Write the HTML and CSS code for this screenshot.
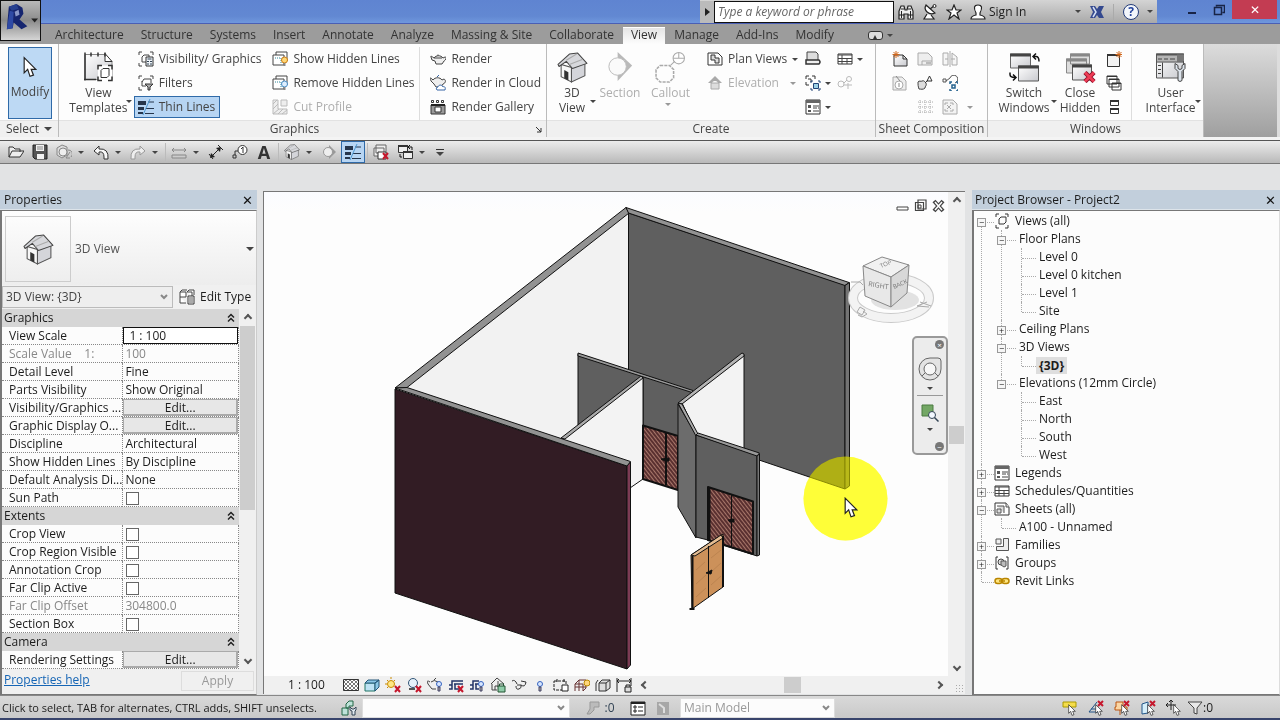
FILE: index.html
```html
<!DOCTYPE html>
<html lang="en">
<head>
<meta charset="utf-8">
<title>Project2 - 3D View: {3D}</title>
<link rel="stylesheet" href="styles.css">
</head>
<body>
<svg class="sprite" aria-hidden="true">
  <defs>
    <linearGradient id="shade" x1="0" y1="0" x2="1" y2="1"><stop offset="0" stop-color="#fff"/><stop offset="1" stop-color="#c9cacf"/></linearGradient>
    <pattern id="hatch" width="3" height="3" patternUnits="userSpaceOnUse" patternTransform="rotate(-38)"><rect width="3" height="3" fill="#5a3030"/><rect width="1" height="3" fill="#a8776a"/></pattern>
    <pattern id="checks" width="4" height="4" patternUnits="userSpaceOnUse"><rect width="4" height="4" fill="#fff"/><path d="M0 0h2v2H0zM2 2h2v2H2z" fill="#777"/></pattern>
  </defs>
  <symbol id="house" viewBox="0 0 30 30"><path d="M4 12v12l10 5V15z" fill="#f7f7f7" stroke="#555"/><path d="M14 15v14l13-6V11z" fill="#d4d5da" stroke="#555"/><path d="M1 12 12 2l8-1 9 10-14 5-6-7-7 5z" fill="#d7d8dc" stroke="#444" stroke-linejoin="round"/><path d="m9 8 10-6M12 12l13-5" stroke="#aaa" fill="none"/><path d="M7 17.500v8l4 2v-8z" fill="#333"/></symbol>
  <symbol id="templates" viewBox="0 0 31 30"><path d="M2 2h20l7 7v18H2z" fill="url(#shade)" stroke="#888"/><path d="M22 1v8h7z" fill="#fff" stroke="#333"/><path d="M2 0v28M8 0v4M15 0v4M22 0v4M1 27h12" fill="none" stroke="#333" stroke-width="1.500"/><path d="M15 13h14v16H15z" fill="#fff"/><path d="M15 17v-4h4M25 13h4v4M29 24v4h-4M19 28h-4v-4" fill="none" stroke="#333" stroke-width="1.500"/><path d="M18 18l2-2h6v7l-2 2h-6z" fill="#fff" stroke="#333"/></symbol>
  <symbol id="vg" viewBox="0 0 16 16"><path d="M1 4V1h3M12 1h3v3M4 15H1v-3M4 6l2-2h5v5l-2 2H4z" fill="none" stroke="#444"/><path d="M8 6h7v9H8z" fill="#eef3f8" stroke="#333"/><path d="M9.500 8h4M9 10.500h2m1 0h2M9 13h2m1 0h2" stroke="#345"/></symbol>
  <symbol id="filters" viewBox="0 0 16 16"><path d="M1 4V1h3M12 1h3v3M4 15H1v-3M4 7l2-3h7v4M4 6v5h4" fill="none" stroke="#444"/><path d="M7 9h8l-3 3v3h-2v-3z" fill="#aaa" stroke="#333"/></symbol>
  <symbol id="thin" viewBox="0 0 16 16"><path d="M0 2h8v4H0zM0 8h6v3H0zM0 13h5v2H0z" fill="#26364c"/><path d="M10 3h6M8 9.500h8M7 14.500h9" stroke="#26364c"/><path d="M12 0 5 16" stroke="#4d98d0"/></symbol>
  <symbol id="hidden-on" viewBox="0 0 16 16"><path d="M1 4v10h11V4zM4 4V1h11v9" fill="#fff" stroke="#444"/><path d="M3 7h6v5" fill="none" stroke="#389" stroke-dasharray="1 1"/><circle cx="12.500" cy="9" r="3" fill="#ffd877" stroke="#c87a13"/><path d="M11.500 12h2v3h-2z" fill="#888"/></symbol>
  <symbol id="hidden-off" viewBox="0 0 16 16"><path d="M1 4v10h11V4zM4 4V1h11v9" fill="#fff" stroke="#444"/><path d="M3 7h6v5" fill="none" stroke="#389" stroke-dasharray="1 1"/><circle cx="12.500" cy="9" r="3" fill="#dfefff" stroke="#478bc4"/><path d="M11.500 12h2v3h-2z" fill="#888"/></symbol>
  <symbol id="cut" viewBox="0 0 16 16"><path d="M1 1h5v9h9v5H1zM9 1h6v6H9z" fill="#eee" stroke="#bbb"/><path d="m1 5 4-4M1 10l5-5M1 15l6-5m-1 5 5-5m-1 5 5-4" stroke="#bbb"/></symbol>
  <symbol id="teapot" viewBox="0 0 16 16"><path d="M4 7Q0 4 1 6l1 3 3 1 1 3h6l2-3c2-1 3-4 1-4l-2 1c-2-3-7-3-9 0z" fill="#eee" stroke="#444"/><path d="M4 7h8M8 5V3.500" stroke="#444"/></symbol>
  <symbol id="teacloud" viewBox="0 0 16 16"><path d="M3 5C0 2 0 2 1 6l3 3 2 3h5l2-3c3-1 3-4 1-5l-2 1c-2-3-7-3-9 0z" fill="#eee" stroke="#444"/><path d="M7 2 9 0M7 15h8c1-3-1-4-2-3-1-3-5-2-5 0-2 0-2 2-1 3z" fill="#fff" stroke="#3665a5"/></symbol>
  <symbol id="gallery" viewBox="0 0 16 16"><path d="M1.500 1.500h2v2h-2zM6.500 1.500h2v2h-2zM11.500 1.500h2v2h-2z" fill="#fff" stroke="#333"/><path d="M1 6h14v9H1z" fill="#999" stroke="#333"/><path d="M5 8h6v5H5z" fill="#fff" stroke="#333"/><path d="M1 6h14" stroke="#222" stroke-width="2"/></symbol>
  <symbol id="section" viewBox="0 0 30 32"><path d="M12 0l15 14-15 16z" fill="#b9b9b9"/><circle cx="12" cy="15" r="9" fill="#fafafa" stroke="#bbb"/></symbol>
  <symbol id="callout" viewBox="0 0 30 30"><path d="M5 13h9l4 4v8l-4 4H5l-4-4v-8z" fill="none" stroke="#aaa" stroke-width="1.500" stroke-dasharray="3 1"/><circle cx="23" cy="6" r="5.500" fill="#fff" stroke="#aaa"/><path d="M17.500 6h11M23 1v5M15 13l4-4" stroke="#aaa"/></symbol>
  <symbol id="plan" viewBox="0 0 16 16"><path d="M1 2h10l4 4v8H1z" fill="#fff" stroke="#333"/><path d="M4 4h4v3h4v5H8v-3H4z" fill="#ddd" stroke="#333"/></symbol>
  <symbol id="elev" viewBox="0 0 16 16"><path d="m1 8 7-7 7 7z" fill="#aaa"/><circle cx="8" cy="9" r="3" fill="#fff"/><path d="M4 8h8v6H4z" fill="#ddd" stroke="#aaa"/></symbol>
  <symbol id="draft" viewBox="0 0 16 16"><path d="M2 1h9l2 2v7H2z" fill="#ddd" stroke="#444"/><path d="M1 9h13q2 2 0 4H1z" fill="#eee" stroke="#333" stroke-width="1.500"/></symbol>
  <symbol id="dup" viewBox="0 0 16 16"><path d="M1 4V1h3M7 1h3v3M1 7v3h3M3 4h3v3" fill="none" stroke="#333"/><path d="M8.500 8.500h5v5h-5z" fill="#9cd0e6" stroke="#247"/><path d="M6 8V6h2m5 0h2v2m0 5v2h-2m-5 0H6v-2" fill="none" stroke="#247"/></symbol>
  <symbol id="legend" viewBox="0 0 16 16"><path d="M1 1h14v14H1z" fill="#fff" stroke="#333"/><path d="M1 2.500h14" stroke="#666" stroke-width="3"/><path d="M3 6h3v3H3zM3 11h3v2H3z" fill="#555"/><path d="M8 7h6M8 9h4m1 0h1M8 12h6" stroke="#444"/></symbol>
  <symbol id="sched" viewBox="0 0 16 16"><path d="M1 3h14v10H1z" fill="#fff" stroke="#333"/><path d="M1 4h14M5 4v9M1 7.500h14M1 10.500h14M10 7v6" stroke="#444"/></symbol>
  <symbol id="scope" viewBox="0 0 16 16"><circle cx="4" cy="9" r="3" fill="none" stroke="#bbb"/><circle cx="12" cy="4" r="2.500" fill="none" stroke="#bbb"/><path d="m7 8 3-3M7 10h8M11 8v6" stroke="#bbb"/></symbol>
  <symbol id="sheet" viewBox="0 0 16 16"><path d="M2 4h9l4 4v7H2z" fill="url(#shade)" stroke="#333"/><path d="M11 4v4h4" fill="none" stroke="#333"/><path d="M4 0v7M.5 3.500h7M1.500 1l5 5m0-5-5 5" stroke="#d0661b"/></symbol>
  <symbol id="titleblk" viewBox="0 0 16 16"><path d="M1 2h10l4 4v8H1z" fill="#eee" stroke="#aaa"/><path d="M5 14v-4h10" fill="none" stroke="#aaa"/><path d="M9 11h5v2H9z" fill="#bbb"/></symbol>
  <symbol id="match" viewBox="0 0 16 16"><path d="M1 2h5v12H1zM10 2l5 4v8h-5zM8 0v16" fill="#f6f6f6" stroke="#aaa"/><path d="M3 8h3m3 0h4" stroke="#aaa"/></symbol>
  <symbol id="rev" viewBox="0 0 16 16"><path d="M1 2h9l4 4v9H1z" fill="#eee" stroke="#aaa"/><circle cx="7" cy="10" r="4" fill="#fff" stroke="#aaa"/><path d="m4 1 4 5M7 8v4" stroke="#888"/></symbol>
  <symbol id="guide" viewBox="0 0 16 16"><path d="M1 7c1-2 3 0 4-1 2-1 3 1 4 2 1 3-1 3-1 5-2 2-4 1-6 1-1-3-1-4-1-7z" fill="#ddd" stroke="#444"/><path d="m8 8 3-3M10 6h5l-2.500-5z" fill="none" stroke="#333"/></symbol>
  <symbol id="activate" viewBox="0 0 16 16"><path d="M1 4h3v3H1zM4 6l4-3a4 4 0 1 1 5 5" fill="none" stroke="#555"/><path d="M8 9V7h2m4 0h2v2m0 5v2h-2m-4 0H8v-2m2-4h3v3h-3z" fill="none" stroke="#26638f" stroke-width="1.500"/></symbol>
  <symbol id="grid" viewBox="0 0 16 16"><path d="M1 3h15M1 8h15M1 13h15M3 1v14M8 1v14M13 1v14" stroke="#aaa" stroke-dasharray="1 1"/></symbol>
  <symbol id="vport" viewBox="0 0 16 16"><path d="M1 1h10l4 4v10H1z" fill="#f3f3f3" stroke="#aaa"/><path d="M3 6V4h3m2 0h3v2m0 4v2H8m-2 0H3v-2m2-4 4 4m0-4-4 4" fill="none" stroke="#aaa"/></symbol>
  <symbol id="switch" viewBox="0 0 31 30"><path d="M1.500 1.500h20v14h-20z" fill="url(#shade)" stroke="#666"/><path d="M1 2.500h21" stroke="#444" stroke-width="3"/><path d="M9.500 13.500h20v15h-20z" fill="url(#shade)" stroke="#555"/><path d="M9 14.500h21" stroke="#444" stroke-width="3"/><path d="m27 1-3 3 3 3M24 4h3q3 0 3 5M1 20v2q0 3 5 3M4 22l3 3-3 3" fill="none" stroke="#111" stroke-width="1.500"/></symbol>
  <symbol id="closehid" viewBox="0 0 31 30"><path d="M5.500 1.500h19v10h-19zM1.500 6.500h20v14h-20z" fill="#ddd" stroke="#888"/><path d="M5 2.500h20M1 7.500h21" stroke="#888" stroke-width="3"/><path d="M7.500 12.500h19v15h-19z" fill="url(#shade)" stroke="#555"/><path d="M7 13.500h20" stroke="#444" stroke-width="3"/><path d="m20 20 9 9m0-9-9 9" stroke="#8f1028" stroke-width="4.500"/><path d="m20 20 9 9m0-9-9 9" stroke="#ef3c56" stroke-width="2.500"/></symbol>
  <symbol id="newwin" viewBox="0 0 16 16"><path d="M1.500 3.500h12v12h-12z" fill="#f2f2f2" stroke="#333"/><path d="M1 4h13" stroke="#333" stroke-width="2"/><path d="M13 0v7M9.500 3.500h7M10.500 1l5 5m0-5-5 5" stroke="#d0661b"/></symbol>
  <symbol id="cascade" viewBox="0 0 16 16"><path d="M1 1h10v8H1zM3 4h10v8H3zM6 8h9v7H6z" fill="#fff" stroke="#333"/><path d="M1 1.500h10M3 4.500h10M6 8.500h9" stroke="#333"/></symbol>
  <symbol id="tile" viewBox="0 0 16 16"><path d="M4.500 1.500h8v5h-8zM4.500 9.500h8v5h-8z" fill="#fff" stroke="#333"/><path d="M4 2h9M4 10h9" stroke="#333" stroke-width="2"/></symbol>
  <symbol id="ui" viewBox="0 0 31 30"><path d="M1.500 1.500h27v24h-27z" fill="url(#shade)" stroke="#555"/><path d="M2 5.500h26" stroke="#b5b5b5" stroke-width="7"/><path d="M1 2h28" stroke="#555" stroke-width="2"/><path d="M22 2h7v7h-7z" fill="#777"/><path d="M3 6.500h4m2 0h4m2 0h5M2 9.500h27M7.500 10v15M3 13h3m-3 4h3m-3 4h3" stroke="#444"/><path d="M20 11v5l3 3v9q2 2 4 0v-9l3-3v-5l-3 2v3l-2 1-2-1v-3z" fill="#dde4ec" stroke="#444"/></symbol>
  <symbol id="open" viewBox="0 0 16 16"><path d="M1 13V3h4l2 2h5v3M1 13l3-6h12l-4 6z" fill="#eee" stroke="#333"/></symbol>
  <symbol id="save" viewBox="0 0 16 16"><path d="M1 1h14v14H3l-2-2z" fill="#555" stroke="#222"/><path d="M4 1h8v6H4zM5 10h7v5H5z" fill="#f2f2f2"/><path d="M5 3h6M5 5h6" stroke="#888"/></symbol>
  <symbol id="sync" viewBox="0 0 16 16"><path d="m1 4 5-3 5 2v8l-5 3-5-3z" fill="#ddd" stroke="#888"/><circle cx="7" cy="8" r="4" fill="#eee" stroke="#888"/><path d="m14 8-4 6h4m-2-8a4 4 0 0 1 3 7" fill="none" stroke="#888"/></symbol>
  <symbol id="undo" viewBox="0 0 16 16"><path d="m6 2-5 5 5 4V8q5-1 5 5v2h4q1-11-9-10z" fill="#f7f7f7" stroke="#333"/></symbol>
  <symbol id="redo" viewBox="0 0 16 16"><path d="m10 2 5 5-5 4V8q-5-1-5 5v2H1Q0 4 10 5z" fill="#eee" stroke="#999"/></symbol>
  <symbol id="measure" viewBox="0 0 16 16"><path d="M1 11h14v3H1z" fill="#ccc" stroke="#888"/><path d="M1 6h14M3 4 1 6l2 2m10-4 2 2-2 2" fill="none" stroke="#888"/></symbol>
  <symbol id="dim" viewBox="0 0 16 16"><path d="m3 13 9-9M1 10l4 5M10 1l5 5" stroke="#222"/><path d="m2 14 1-5 4 4zM13 3 8 4l4 4z" fill="#222"/></symbol>
  <symbol id="tag" viewBox="0 0 16 16"><path d="M1 11h3v3H1zM3 11V7h3" fill="none" stroke="#333"/><circle cx="10.500" cy="6" r="4.500" fill="#fff" stroke="#333"/><path d="m9 5 2-2v6" fill="none" stroke="#333"/></symbol>
  <symbol id="sectsm" viewBox="0 0 16 16"><path d="m8 1 7 7-7 7z" fill="#999"/><circle cx="7" cy="8" r="4.500" fill="#eee" stroke="#999"/></symbol>
  <symbol id="redx" viewBox="0 0 16 16"><path d="m10 9 5 6m0-6-5 6" stroke="#c5182d" stroke-width="2"/></symbol>
  <symbol id="closewin" viewBox="0 0 16 16"><path d="M3 1h10v8H3zM1 4h10v8H1z" fill="#eee" stroke="#666"/><path d="M5 8h8v7H5z" fill="#fff" stroke="#333"/><use href="#redx"/></symbol>
  <symbol id="switchsm" viewBox="0 0 16 16"><path d="M1.500 1.500h9v7h-9zM6.500 7.500h9v7h-9z" fill="#eee" stroke="#333"/><path d="M1 2h10M6 8h10" stroke="#333" stroke-width="2"/><path d="M12 3h3v3m-12 4v3h2m8-12-2 2 2 2" fill="none" stroke="#111"/></symbol>
  <symbol id="binoc" viewBox="0 0 16 16"><path d="M1 15V7l2-5h3l1 4h2l1-4h3l2 5v8h-5v-5H6v5z" fill="#eee" stroke="#222" stroke-width="1.200"/><path d="M3 5h3m4 0h3M1 11h5m4 0h5M3.500 7v7m9-7v7" stroke="#222"/></symbol>
  <symbol id="dish" viewBox="0 0 16 16"><path d="M4 1c-3 5 3 11 9 8zM5 10l-3 5h10l-3-4M8 5l4-3" fill="#fff" stroke="#222" stroke-width="1.200"/><circle cx="12.500" cy="2" r="1.500" fill="#fff" stroke="#222"/></symbol>
  <symbol id="star" viewBox="0 0 16 16"><path d="m8 1 2 5h5l-4 3 2 6-5-4-5 4 2-6-4-3h5z" fill="#fff" stroke="#222" stroke-width="1.200"/></symbol>
  <symbol id="person" viewBox="0 0 16 16"><path d="M1 15q0-3 5-4V9Q2 1 8 1t2 8v2q5 1 5 4z" fill="#fff" stroke="#222" stroke-width="1.200"/></symbol>
  <symbol id="exch" viewBox="0 0 16 16"><path d="M1 2h5l2 3 2-3h5l-3 6 3 6h-5l-2-3-2 3H1l3-6z" fill="#34498f"/><path d="m4 3 3 5-3 5" fill="none" stroke="#d5e0f4" stroke-width="1.500"/></symbol>
  <symbol id="views" viewBox="0 0 16 16"><path d="M2 4V1h3M11 1h3v3M14 12v3h-3M5 15H2v-3M5 6l2-2h5v5l-2 2H5z" fill="none" stroke="#333"/></symbol>
  <symbol id="sheets" viewBox="0 0 16 16"><path d="M1 2h11l3 4v8H1z" fill="#fff" stroke="#333"/><path d="M3 5h7v7M3 8h4v4H3zM12 2v4h3" fill="#ddd" stroke="#555"/></symbol>
  <symbol id="families" viewBox="0 0 16 16"><path d="M2 2h5v5H2zM9.500 1.500h5v12h-12v-4h7z" fill="#eee" stroke="#555"/></symbol>
  <symbol id="groups" viewBox="0 0 16 16"><path d="M4 2H2v12h2m8-12h2v12h-2" fill="none" stroke="#333"/><circle cx="7" cy="7" r="3" fill="#ddd" stroke="#444"/><path d="M7 6h5v5l-2 1-3-2z" fill="#bbb" stroke="#555"/></symbol>
  <symbol id="links" viewBox="0 0 16 16"><rect x="1" y="5.500" width="7" height="5" rx="2.500" fill="#ffe680" stroke="#b98500" stroke-width="1.500"/><rect x="8" y="5.500" width="7" height="5" rx="2.500" fill="#ffe680" stroke="#b98500" stroke-width="1.500"/><path d="M5 8h6" stroke="#b98500" stroke-width="1.500"/></symbol>
  <symbol id="edittype" viewBox="0 0 16 16"><path d="M1 3h6v5H1zM8 3l2-2h5v5M1 3l2-2h5M1 8v6h6M8 3h5v4" fill="#fff" stroke="#444"/><path d="M9 7h6v8H9z" fill="#fff" stroke="#333"/><path d="M10 9h4m-4 2h4m-4 2h4" stroke="#555"/></symbol>
  <symbol id="detail" viewBox="0 0 16 16"><path d="M.5 2.500h15v11H.5z" fill="url(#checks)" stroke="#333"/></symbol>
  <symbol id="cube" viewBox="0 0 16 16"><path d="M1 6h10v8H1z" fill="#bde2f4" stroke="#276"/><path d="m1 6 3-3h11l-4 3zM11 14l4-4V3l-4 3z" fill="#8cc8e6" stroke="#257"/></symbol>
  <symbol id="sun" viewBox="0 0 16 16"><circle cx="6" cy="7" r="3.500" fill="#ffe884" stroke="#c98a00"/><path d="M6 0v2M0 7h2M2 3l1 1M10 3 9 4M2 11l1-1" stroke="#c98a00"/><use href="#redx"/></symbol>
  <symbol id="shadow" viewBox="0 0 16 16"><circle cx="7" cy="6" r="4.500" fill="#e6f2fa" stroke="#357"/><path d="M3 12h6" stroke="#555" stroke-width="2"/><use href="#redx"/></symbol>
  <symbol id="bulb" viewBox="0 0 16 16"><circle cx="8" cy="7" r="2.500" fill="#d7e6ff" stroke="#3563c0"/><path d="M7 10h2v4H7z" fill="#aaa" stroke="#446"/></symbol>
  <symbol id="teabulb" viewBox="0 0 16 16"><path d="M3 5C0 3 0 4 1 7l4 5h4M4 5q3-3 7 0M7 3l2-2" fill="none" stroke="#444"/><use href="#bulb" x="4" width="16" height="16"/></symbol>
  <symbol id="cropx" viewBox="0 0 16 16"><path d="M1 12h3V4h11M1 8h3m2-1h9M7 7v5h4" fill="none" stroke="#236" stroke-width="1.500"/><use href="#redx"/></symbol>
  <symbol id="cropb" viewBox="0 0 16 16"><path d="M1 12h3V4h6M1 8h3m2-1h4M7 7v5h3" fill="none" stroke="#236" stroke-width="1.500"/><use href="#bulb" x="4" width="16" height="16"/></symbol>
  <symbol id="lock3d" viewBox="0 0 16 16"><path d="m1 7 6-6 7 6M2 7v6h5M5 13V9h3M8 4v6" fill="none" stroke="#444"/><path d="M8 9h7v6H8z" fill="#8ecba8" stroke="#253"/><path d="M9.500 9V7h4v2" fill="none" stroke="#253"/></symbol>
  <symbol id="glasses" viewBox="0 0 16 16"><path d="M1 4q3-2 5 3M5 9q0 4 3 3t2-4H6m4 0q4 3 5-3l-5-1" fill="none" stroke="#333"/></symbol>
  <symbol id="constr" viewBox="0 0 16 16"><path d="M1 4h12v9H1z" fill="none" stroke="#222" stroke-dasharray="3 1"/><path d="M9 8h6v6H9zM4 2v3m7-3v3" fill="#fff" stroke="#222"/></symbol>
  <symbol id="analytic" viewBox="0 0 16 16"><path d="M1 7l4-4h7v8l-3 3M1 7h8v7M1 7v7m4-7v7m0-11v4M1 10h11" fill="none" stroke="#633"/><circle cx="13" cy="6" r="3" fill="#ffd77b" stroke="#b80"/></symbol>
  <symbol id="displace" viewBox="0 0 16 16"><path d="M4 6h7v8H4zM4 6l3-3h8v8l-4 3M11 6l4-3M1 6v8m2-11-2 3" fill="#ddd" stroke="#333"/></symbol>
  <symbol id="dimlock" viewBox="0 0 16 16"><path d="M1 1v14M15 1v8M1 4h14M3 2 1 4l2 2m10-4 2 2-2 2" fill="none" stroke="#222"/><path d="M9 10h6v5H9zM10 10V8h4v2" fill="#ddd" stroke="#222"/></symbol>
  <symbol id="workset" viewBox="0 0 16 16"><path d="M1 8h6v7H1zM5 4l3-3h4v5H8v2H5z" fill="#bfe3da" stroke="#264"/><path d="M9 7v3l2 1v4h3v-4l1-1V7l-2 2h-2z" fill="#dfe8ee" stroke="#345"/></symbol>
  <symbol id="brush" viewBox="0 0 16 16"><path d="M5 2h9v5H9v3l-4 4H2l3-5z" fill="#bbb" stroke="#999"/></symbol>
  <symbol id="optlist" viewBox="0 0 16 16"><path d="M1 2h14v13H1z" fill="#fff" stroke="#222"/><path d="M1 3h14" stroke="#222" stroke-width="2"/><path d="M4 6h2v2H4zM4 10h2v2H4zM8 7h5m-5 4h5" stroke="#222" fill="none"/></symbol>
  <symbol id="optdis" viewBox="0 0 16 16"><path d="M2 2h12v13H2z" fill="#a7a7a7"/><path d="m4 4 5 4v5" fill="none" stroke="#ddd" stroke-width="2"/></symbol>
  <symbol id="ptr" viewBox="0 0 12 18"><path d="M1 1v13l3-3 2 6 3-1-2-5h4z" fill="#fff" stroke="#222"/></symbol>
  <symbol id="sellink" viewBox="0 0 16 16"><path d="M1 2h13v5H1z" fill="#f5dd4d" stroke="#a90"/><use href="#ptr" x="6" y="4" width="8" height="12"/></symbol>
  <symbol id="selunder" viewBox="0 0 16 16"><path d="M9 2 1 12h9M3 9h7" fill="none" stroke="#258"/><use href="#ptr" x="7" y="4" width="8" height="12"/><path d="m10 1 5 5m0-5-5 5" stroke="#c5182d" stroke-width="2"/></symbol>
  <symbol id="selpin" viewBox="0 0 16 16"><path d="M2 2h7v5h4v3H1V7h1zM6 10v5" fill="#fbd6a4" stroke="#b51"/><use href="#ptr" x="7" y="4" width="8" height="12"/><path d="m10 1 5 5m0-5-5 5" stroke="#c5182d" stroke-width="2"/></symbol>
  <symbol id="selface" viewBox="0 0 16 16"><path d="m2 4 6-2v11l-6 1z" fill="#d5eefa" stroke="#258"/><use href="#ptr" x="7" y="4" width="8" height="12"/><path d="m10 1 5 5m0-5-5 5" stroke="#c5182d" stroke-width="2"/></symbol>
  <symbol id="drag" viewBox="0 0 16 16"><path d="M5 0v10M0 5h10M3 2l2-2 2 2M2 3 0 5l2 2" fill="none" stroke="#222"/><use href="#ptr" x="7" y="4" width="8" height="12"/></symbol>
  <symbol id="funnel" viewBox="0 0 16 16"><path d="M1 2h14l-5 6v6l-3-1V8z" fill="#e8e8e8" stroke="#444"/></symbol>
  <symbol id="collapse" viewBox="0 0 8 10"><path d="m1 4.500 3-3 3 3m-6 4 3-3 3 3" fill="none" stroke="#222" stroke-width="1.500"/></symbol>
</svg>

<header class="titlebar">
  <div class="infocenter">
    <button class="search-toggle" aria-label="Toggle search"><i class="caret right"></i></button>
    <input class="search" type="text" placeholder="Type a keyword or phrase" aria-label="Search help">
    <button aria-label="Search"><svg class="ic"><use href="#binoc"/></svg></button>
    <button aria-label="Subscription"><svg class="ic"><use href="#dish"/></svg></button>
    <button aria-label="Favorites"><svg class="ic"><use href="#star"/></svg></button>
    <button class="signin"><svg class="ic"><use href="#person"/></svg>Sign In</button>
    <button class="drop" aria-label="Account menu"><i class="caret"></i></button>
    <button aria-label="Exchange apps"><svg class="ic"><use href="#exch"/></svg></button>
    <button class="help" aria-label="Help"><span>?</span></button>
    <button class="drop" aria-label="Help menu"><i class="caret"></i></button>
  </div>
  <div class="winbtns">
    <button aria-label="Minimize"><i class="min"></i></button>
    <button aria-label="Restore"><svg width="12" height="12" viewBox="0 0 12 12"><path d="M3.500 2.500v-1h8v7h-2M1.500 3.500h7v7h-7z" fill="none" stroke="#182446" stroke-width="1.500"/></svg></button>
    <button class="close" aria-label="Close">✕</button>
  </div>
</header>
<button class="app" aria-label="Application menu">
  <svg viewBox="0 0 40 40"><path d="M8 6l8-3 6 4 1 6-4 6 8 7-6 3-8-7-1 6-6 1z" fill="#16256f"/><path d="M8 6l8-3 2 5-7 2z" fill="#27408f"/><path d="m14 11 4-2 1 5-4 2z" fill="#8a97c8"/><path d="m9 10 4 1-1 17-6 1z" fill="#2f4aa5"/><path d="M31 18h7l-3.500 4z" fill="#222"/></svg>
</button>

<nav class="tabs">
  <button>Architecture</button><button>Structure</button><button>Systems</button><button>Insert</button><button>Annotate</button><button>Analyze</button><button>Massing &amp; Site</button><button>Collaborate</button><button class="on">View</button><button>Manage</button><button>Add-Ins</button><button>Modify</button>
  <button class="ribbon-state" aria-label="Minimize ribbon"><span>▴</span><i class="caret"></i></button>
</nav>

<section class="ribbon">
  <div class="panel">
    <div class="tools select"><button class="big modify"><svg class="cursor"><use href="#ptr"/></svg><span>Modify</span></button></div>
    <h2>Select <i class="caret wide"></i></h2>
  </div>
  <div class="panel">
    <div class="tools graphics">
      <button class="big"><svg class="lg"><use href="#templates"/></svg><span>View<br>Templates</span><i class="caret"></i></button>
      <div class="col">
        <button><svg class="ic"><use href="#vg"/></svg>Visibility/ Graphics</button>
        <button><svg class="ic"><use href="#filters"/></svg>Filters</button>
        <button class="active"><svg class="ic"><use href="#thin"/></svg>Thin Lines</button>
      </div>
      <div class="col">
        <button><svg class="ic"><use href="#hidden-on"/></svg>Show Hidden Lines</button>
        <button><svg class="ic"><use href="#hidden-off"/></svg>Remove Hidden Lines</button>
        <button disabled><svg class="ic"><use href="#cut"/></svg>Cut Profile</button>
      </div>
      <div class="col ruled">
        <button><svg class="ic"><use href="#teapot"/></svg>Render</button>
        <button><svg class="ic"><use href="#teacloud"/></svg>Render in Cloud</button>
        <button><svg class="ic"><use href="#gallery"/></svg>Render Gallery</button>
      </div>
    </div>
    <h2 class="launch"><span>Graphics</span><svg width="7" height="7" viewBox="0 0 7 7"><path d="m1 1 5 5M6 2v4H2" fill="none" stroke="#333"/></svg></h2>
  </div>
  <div class="panel">
    <div class="tools create">
      <button class="big"><svg class="lg"><use href="#house"/></svg><span>3D<br>View</span><i class="caret"></i></button>
      <button class="big" disabled><svg class="lg"><use href="#section"/></svg><span>Section</span></button>
      <button class="big under" disabled><svg class="lg"><use href="#callout"/></svg><span>Callout</span><i class="caret"></i></button>
      <div class="col">
        <button><svg class="ic"><use href="#plan"/></svg>Plan Views<i class="caret"></i></button>
        <button disabled><svg class="ic"><use href="#elev"/></svg>Elevation<i class="caret"></i></button>
      </div>
      <div class="col mini">
        <button aria-label="Drafting View"><svg class="ic"><use href="#draft"/></svg></button>
        <button aria-label="Duplicate View"><svg class="ic"><use href="#dup"/></svg><i class="caret"></i></button>
        <button aria-label="Legends"><svg class="ic"><use href="#legend"/></svg><i class="caret"></i></button>
      </div>
      <div class="col mini">
        <button aria-label="Schedules"><svg class="ic"><use href="#sched"/></svg><i class="caret"></i></button>
        <button aria-label="Scope Box" disabled><svg class="ic"><use href="#scope"/></svg></button>
      </div>
    </div>
    <h2>Create</h2>
  </div>
  <div class="panel">
    <div class="tools sheetcomp">
      <button aria-label="Sheet"><svg class="ic"><use href="#sheet"/></svg></button>
      <button aria-label="Title Block" disabled><svg class="ic"><use href="#titleblk"/></svg></button>
      <button aria-label="Matchline" disabled><svg class="ic"><use href="#match"/></svg></button>
      <span></span>
      <button aria-label="Revisions" disabled><svg class="ic"><use href="#rev"/></svg></button>
      <button aria-label="Place View"><svg class="ic"><use href="#guide"/></svg></button>
      <button aria-label="View Reference"><svg class="ic"><use href="#activate"/></svg></button>
      <span></span><span></span>
      <button aria-label="Guide Grid" disabled><svg class="ic"><use href="#grid"/></svg></button>
      <button aria-label="Viewports" disabled><svg class="ic"><use href="#vport"/></svg></button>
      <button aria-label="Viewports menu" disabled><i class="caret"></i></button>
    </div>
    <h2>Sheet Composition</h2>
  </div>
  <div class="panel">
    <div class="tools windows">
      <button class="big"><svg class="lg"><use href="#switch"/></svg><span>Switch<br>Windows</span><i class="caret"></i></button>
      <button class="big"><svg class="lg"><use href="#closehid"/></svg><span>Close<br>Hidden</span></button>
      <div class="col mini">
        <button aria-label="Replicate"><svg class="ic"><use href="#newwin"/></svg></button>
        <button aria-label="Cascade"><svg class="ic"><use href="#cascade"/></svg></button>
        <button aria-label="Tile"><svg class="ic"><use href="#tile"/></svg></button>
      </div>
      <button class="big ruled"><svg class="lg"><use href="#ui"/></svg><span>User<br>Interface</span><i class="caret"></i></button>
    </div>
    <h2>Windows</h2>
  </div>
  <div class="rest"></div>
</section>

<div class="qat">
  <button aria-label="Open"><svg class="ic"><use href="#open"/></svg></button>
  <button aria-label="Save"><svg class="ic"><use href="#save"/></svg></button>
  <button class="dd" aria-label="Synchronize"><svg class="ic"><use href="#sync"/></svg><i class="caret"></i></button>
  <button class="dd" aria-label="Undo"><svg class="ic"><use href="#undo"/></svg><i class="caret"></i></button>
  <button class="dd" aria-label="Redo"><svg class="ic"><use href="#redo"/></svg><i class="caret"></i></button>
  <span class="sep"></span>
  <button class="dd" aria-label="Measure"><svg class="ic"><use href="#measure"/></svg><i class="caret"></i></button>
  <button aria-label="Aligned Dimension"><svg class="ic"><use href="#dim"/></svg></button>
  <button aria-label="Tag by Category"><svg class="ic"><use href="#tag"/></svg></button>
  <button class="text-tool" aria-label="Text">A</button>
  <span class="sep"></span>
  <button class="dd" aria-label="Default 3D View"><svg class="ic"><use href="#house"/></svg><i class="caret"></i></button>
  <button aria-label="Section"><svg class="ic"><use href="#sectsm"/></svg></button>
  <button class="active" aria-label="Thin Lines"><svg class="ic"><use href="#thin"/></svg></button>
  <span class="sep"></span>
  <button aria-label="Close Hidden Windows"><svg class="ic"><use href="#closewin"/></svg></button>
  <button class="dd" aria-label="Switch Windows"><svg class="ic"><use href="#switchsm"/></svg><i class="caret"></i></button>
  <button class="custom" aria-label="Customize toolbar"><i class="caret wide"></i></button>
</div>
<div class="options"></div>

<main>
  <aside class="props">
    <header class="dock"><h2>Properties</h2><button aria-label="Close Properties">✕</button></header>
    <div class="props-body">
      <button class="type"><span class="thumb"><svg><use href="#house"/></svg></span><span>3D View</span><i class="caret wide"></i></button>
      <div class="instance">
        <select aria-label="Instance"><option>3D View: {3D}</option></select>
        <button><svg class="ic"><use href="#edittype"/></svg>Edit Type</button>
      </div>
      <div class="sheet">
        <table>
          <tbody>
          <tr class="group"><th colspan="2"><div>Graphics<svg><use href="#collapse"/></svg></div></th></tr>
          <tr><th><label for="vs">View Scale</label></th><td class="field"><input id="vs" type="text" value="1 : 100"></td></tr>
          <tr class="off"><th>Scale Value &nbsp;&nbsp; 1:</th><td>100</td></tr>
          <tr><th>Detail Level</th><td>Fine</td></tr>
          <tr><th>Parts Visibility</th><td>Show Original</td></tr>
          <tr><th>Visibility/Graphics ...</th><td class="cmd"><button>Edit...</button></td></tr>
          <tr><th>Graphic Display O...</th><td class="cmd"><button>Edit...</button></td></tr>
          <tr><th>Discipline</th><td>Architectural</td></tr>
          <tr><th>Show Hidden Lines</th><td>By Discipline</td></tr>
          <tr><th>Default Analysis Di...</th><td>None</td></tr>
          <tr><th><label for="sp">Sun Path</label></th><td><input id="sp" type="checkbox"></td></tr>
          <tr class="group"><th colspan="2"><div>Extents<svg><use href="#collapse"/></svg></div></th></tr>
          <tr><th><label for="cv">Crop View</label></th><td><input id="cv" type="checkbox"></td></tr>
          <tr><th><label for="cr">Crop Region Visible</label></th><td><input id="cr" type="checkbox"></td></tr>
          <tr><th><label for="ac">Annotation Crop</label></th><td><input id="ac" type="checkbox"></td></tr>
          <tr><th><label for="fc">Far Clip Active</label></th><td><input id="fc" type="checkbox"></td></tr>
          <tr class="off"><th>Far Clip Offset</th><td>304800.0</td></tr>
          <tr><th><label for="sb">Section Box</label></th><td><input id="sb" type="checkbox"></td></tr>
          <tr class="group"><th colspan="2"><div>Camera<svg><use href="#collapse"/></svg></div></th></tr>
          <tr><th>Rendering Settings</th><td class="cmd"><button>Edit...</button></td></tr>
          </tbody>
        </table>
        <div class="vbar"><i class="chev up"></i><span class="thumb-v tall"></span><i class="chev down"></i></div>
      </div>
      <footer><a href="#help">Properties help</a><button disabled>Apply</button></footer>
    </div>
  </aside>

  <section class="view">
    <div class="drawing">
      <svg class="model" viewBox="264 192 684 484" preserveAspectRatio="xMinYMin meet" role="img" aria-label="3D model of walls and doors">
        <g stroke="#111" stroke-width="1" stroke-linejoin="round">
          <path d="M407 388 628 213v248H600z" fill="#f2f2f2" stroke="none"/>
          <path d="M628.500 213 845 285v204L628.500 416z" fill="#5f5f5f"/>
          <path d="m395 388 231-180.500 3 5.500L407 387.500z" fill="#929292"/>
          <path d="m626 207.500 223 75-4 3L628.500 213z" fill="#929292"/>
          <path d="m845 285.500 4.500-3V486l-4.500 3z" fill="#737373"/>
          <path d="m578 354 114 37v102l-49-15V378l-65 49z" fill="#5f5f5f"/>
          <path d="m578 353 115 37.500-1 2L578 356z" fill="#999"/>
          <path d="M643 377v102l-13 9v-26l-67-23z" fill="#f3f3f3" stroke="none"/>
          <path d="M643 377v102l-13 9" fill="none"/>
          <path d="m561 438 80-62 2 2-78 61z" fill="#aaa"/>
          <path d="m643 425.500 35 10.500v54l-35-11z" fill="url(#hatch)" stroke-width="2"/>
          <path d="M666 433v52" stroke-width="2"/><path d="m661 459 8-1v3h-4z" fill="#111"/>
          <path d="M682 403 744 355v96l-47-16z" fill="#f3f3f3"/>
          <path d="m678 403 64-50 2 1v2l-62 48z" fill="#b5b5b5"/>
          <path d="m678 404 18 31v103l-18-31z" fill="#6c6c6c"/>
          <path d="m678 403 4 1 16 30-2 2z" fill="#aaa"/>
          <path d="m696 435 61 20v101l-49-16-12-3z" fill="#5f5f5f"/>
          <path d="m696 435 2-2 61.500 20-2.500 3z" fill="#999"/>
          <path d="m757 456 2.500-2v101l-2.500 1z" fill="#777"/>
          <path d="m708 487 45 14.500V554l-45-14z" fill="url(#hatch)" stroke-width="2"/>
          <path d="M709 487v54" stroke-width="3"/><path d="M731.500 495v52"/><path d="m728 520 6-1v3h-4z" fill="#111"/>
          <path d="m691 555 32-21v53l-31 22z" fill="#cc915a"/>
          <path d="m691 555 30-20 2 3-28 18z" fill="#e4bc91"/>
          <path d="m696 570 9-8m-9 22 10-9m-10 22 10-9m5-30 10-8m-10 22 10-9m-10 22 10-9" stroke="#bc8450"/>
          <path d="M692.500 556v53m-3 0h5M723 536v51" stroke-width="2"/><path d="M708.500 546v52"/><path d="m706 573 6-3-1 4z" fill="#111"/>
          <path d="m395 389 232 77v203l-232-76z" fill="#321c24"/>
          <path d="m627 466 3.500-4v203l-3.500 4z" fill="#7d3c55"/>
          <path d="m395 388 12-.5 223.500 74-3.500 4.500z" fill="#929292"/>
        </g>
        <circle class="glow" cx="845.500" cy="498.500" r="42"/>
        <circle class="halo" cx="845.500" cy="498.500" r="42"/>
        <use href="#ptr" x="844" y="497" width="14" height="21"/>
      </svg>
      <div class="mdi"><button aria-label="Minimize view"><svg viewBox="0 0 14 14"><path d="M1 8h11v3H1z" fill="#fff" stroke="#444"/></svg></button><button aria-label="Restore view"><svg viewBox="0 0 14 14"><path d="M4 1h8v9H4zM1.500 3.500h8v8h-8z" fill="#fff" stroke="#444" stroke-width="1.200"/><path d="M4 6h3v3H4z" fill="none" stroke="#444"/></svg></button><button aria-label="Close view"><svg viewBox="0 0 14 14"><path d="m2 2 9 10m0-10-9 10" stroke="#444" stroke-width="4"/><path d="m3 3 7 8m0-8-7 8" stroke="#fff" stroke-width="1.500"/></svg></button></div>
      <svg class="viewcube" viewBox="0 0 96 76" role="img" aria-label="View cube">
        <ellipse cx="46" cy="50" rx="38" ry="20" fill="none" stroke="#c9c9c9" stroke-width="10"/><ellipse cx="46" cy="50" rx="38" ry="20" fill="none" stroke="#f3f3f3" stroke-width="8"/>
        <ellipse cx="50" cy="52" rx="24" ry="10" fill="#e2e2e2"/>
        <path d="m18 18 19-9 27 8-18 12z" fill="#f1f1f1" stroke="#888"/><path d="m18 18 28 11v30L20 48z" fill="#e8e8e8" stroke="#888"/><path d="m46 29 18-12-2 28-16 14z" fill="#d8d8d8" stroke="#888"/>
        <text x="23" y="38" transform="rotate(10 23 38)">RIGHT</text><text x="49" y="41" transform="rotate(-24 49 41)" class="s">BACK</text><text x="36" y="20" transform="rotate(-20 36 20)" class="s">TOP</text>
        <path d="m12 64 3-5 5 3-3 5zm6-1 4 3-5 3-4-2M72 58l12 1m-9-5 11 4m-14 0 10-4M6 34h9l3 3" stroke="#aaa" fill="none"/>
      </svg>
      <div class="navbar">
        <button class="mini-round" aria-label="Close navigation bar">×</button>
        <button aria-label="Steering wheel"><svg width="24" height="24" viewBox="0 0 24 24"><path d="M12 1h8q3 0 3 3v8a11 11 0 1 1-11-11z" fill="#e3e3e3" stroke="#666"/><circle cx="12" cy="12" r="6" fill="#f7f7f7" stroke="#666"/><path d="m7 16-3 3m13-3 3 3" stroke="#666"/></svg><i class="caret"></i></button>
        <button class="line" aria-label="Zoom region"><svg width="18" height="18" viewBox="0 0 18 18"><path d="M1 1h11v11H1z" fill="#73a765" stroke="#4b7a40"/><circle cx="11" cy="11" r="3.500" fill="#f3f8ff" stroke="#345"/><path d="m13.500 13.500 4 4" stroke="#345" stroke-width="1.500"/></svg><i class="caret"></i></button>
        <button class="mini-round" aria-label="Customize navigation bar">−</button>
      </div>
    </div>
    <div class="vbar"><i class="chev up"></i><span class="thumb-v low"></span><i class="chev down"></i></div>
    <div class="viewbar">
      <button class="scale">1 : 100</button>
      <button aria-label="Detail Level"><svg class="ic"><use href="#detail"/></svg></button>
      <button aria-label="Visual Style"><svg class="ic"><use href="#cube"/></svg></button>
      <button aria-label="Sun Path"><svg class="ic"><use href="#sun"/></svg></button>
      <button aria-label="Shadows"><svg class="ic"><use href="#shadow"/></svg></button>
      <button aria-label="Rendering"><svg class="ic"><use href="#teabulb"/></svg></button>
      <button aria-label="Crop View"><svg class="ic"><use href="#cropx"/></svg></button>
      <button aria-label="Crop Region"><svg class="ic"><use href="#cropb"/></svg></button>
      <button aria-label="Lock 3D View"><svg class="ic"><use href="#lock3d"/></svg></button>
      <button aria-label="Temporary Hide"><svg class="ic"><use href="#glasses"/></svg></button>
      <button aria-label="Reveal Hidden"><svg class="ic"><use href="#bulb"/></svg></button>
      <button aria-label="Temporary View Properties"><svg class="ic"><use href="#constr"/></svg></button>
      <button aria-label="Analytical Model"><svg class="ic"><use href="#analytic"/></svg></button>
      <button aria-label="Displacement"><svg class="ic"><use href="#displace"/></svg></button>
      <button aria-label="Constraints"><svg class="ic"><use href="#dimlock"/></svg></button>
      <div class="hbar"><i class="chev left"></i><span class="thumb-h"></span><i class="chev right"></i></div>
    </div>
    <div class="grip"></div>
  </section>

  <aside class="browser">
    <header class="dock"><h2>Project Browser - Project2</h2><button aria-label="Close Project Browser">✕</button></header>
    <ul class="tree">
      <li><div><button>−</button><svg class="ic"><use href="#views"/></svg>Views (all)</div>
        <ul>
          <li><div><button>−</button>Floor Plans</div>
            <ul><li><div>Level 0</div></li><li><div>Level 0 kitchen</div></li><li><div>Level 1</div></li><li><div>Site</div></li></ul></li>
          <li><div><button>+</button>Ceiling Plans</div></li>
          <li><div><button>−</button>3D Views</div>
            <ul><li><div><strong>{3D}</strong></div></li></ul></li>
          <li><div><button>−</button>Elevations (12mm Circle)</div>
            <ul><li><div>East</div></li><li><div>North</div></li><li><div>South</div></li><li><div>West</div></li></ul></li>
        </ul></li>
      <li><div><button>+</button><svg class="ic"><use href="#legend"/></svg>Legends</div></li>
      <li><div><button>+</button><svg class="ic"><use href="#sched"/></svg>Schedules/Quantities</div></li>
      <li><div><button>−</button><svg class="ic"><use href="#sheets"/></svg>Sheets (all)</div>
        <ul><li><div class="bare">A100 - Unnamed</div></li></ul></li>
      <li><div><button>+</button><svg class="ic"><use href="#families"/></svg>Families</div></li>
      <li><div><button>+</button><svg class="ic"><use href="#groups"/></svg>Groups</div></li>
      <li><div class="link"><svg class="ic"><use href="#links"/></svg>Revit Links</div></li>
    </ul>
  </aside>
</main>

<footer class="status">
  <p>Click to select, TAB for alternates, CTRL adds, SHIFT unselects.</p>
  <button aria-label="Worksets"><svg class="ic"><use href="#workset"/></svg></button>
  <select class="workset" aria-label="Active workset"><option></option></select>
  <button class="count" disabled><svg class="ic"><use href="#brush"/></svg>:0</button>
  <button aria-label="Design options"><svg class="ic"><use href="#optlist"/></svg></button>
  <button class="addset" aria-label="Add to set" disabled><svg class="ic"><use href="#optdis"/></svg></button>
  <select class="option" aria-label="Active design option"><option>Main Model</option></select>
  <div class="selection">
    <button aria-label="Select links"><svg class="ic"><use href="#sellink"/></svg></button>
    <button aria-label="Select underlay"><svg class="ic"><use href="#selunder"/></svg></button>
    <button aria-label="Select pinned"><svg class="ic"><use href="#selpin"/></svg></button>
    <button aria-label="Select by face"><svg class="ic"><use href="#selface"/></svg></button>
    <button aria-label="Drag on selection"><svg class="ic"><use href="#drag"/></svg></button>
    <button class="filter"><svg class="ic"><use href="#funnel"/></svg>:0</button>
  </div>
</footer>
</body>
</html>
```

FILE: styles.css
```css
* { box-sizing: border-box; }
body { margin: 0; min-height: 100vh; display: flex; flex-direction: column; font: 12px/18px "Open Sans", "Noto Sans", sans-serif; color: #1c1c1c; background: #e2e3e4; border-bottom: 2px solid #38446c; }
button, input, select { font: inherit; color: inherit; margin: 0; }
button { background: none; border: 0; padding: 0; display: flex; align-items: center; white-space: nowrap; }
h2, p, ul { margin: 0; padding: 0; font: inherit; }
ul { list-style: none; }
.sprite { position: absolute; width: 0; height: 0; }
.ic { width: 16px; height: 16px; flex: none; }
.lg { width: 31px; height: 31px; flex: none; }
.caret { border: 3px solid transparent; border-top-color: #444; border-bottom: 0; flex: none; }
.caret.wide { border-width: 4px 4px 0; }
.caret.right { border: 4px solid transparent; border-left: 5px solid #222; border-right: 0; }
button:disabled { color: #aeaeae; }
button:disabled .caret { border-top-color: #999; }

.titlebar { height: 24px; display: flex; justify-content: flex-end; background: linear-gradient(#5f84d1, #6288d2 70%, #6f97dd); border-bottom: 1px solid #4a5fb4; }
.infocenter { width: 457px; display: flex; align-items: center; gap: 8px; padding-right: 4px; background: linear-gradient(#d4d4d4, #a9a9a9); }
.search-toggle { width: 14px; height: 22px; justify-content: center; margin-right: -8px; background: #bbb; }
.search { width: 180px; height: 22px; margin-right: -4px; border: 1px solid #111; padding: 0 3px; background: #fff; font-style: italic; }
.search::placeholder { color: #666; }
.signin { gap: 3px; }
.signin + .drop { margin-left: auto; }
.help span { width: 16px; height: 16px; border: 1px solid #223a77; border-radius: 50%; background: #f3f6fb; color: #24439c; font: bold 12px/14px "Open Sans", sans-serif; text-align: center; }
.help { padding-left: 9px; border-left: 1px solid #aaa; }
.winbtns { width: 123px; display: flex; justify-content: flex-end; align-items: flex-start; padding-right: 3px; }
.winbtns button { width: 27px; height: 19px; justify-content: center; }
.winbtns .close { width: 45px; background: #c33c52; color: #fff; }
.min { width: 8px; height: 2px; background: #182446; margin-top: 6px; }
.app { position: absolute; left: 0; top: 0; width: 41px; height: 41px; border: 1px solid #111; background: linear-gradient(#b9b9b9, #8b8b8b 50%, #d5d5d5); z-index: 1; }
.app svg { width: 100%; }

.tabs { height: 20px; display: flex; gap: 1px; padding-left: 47px; background: #9c9c9c; }
.tabs button { padding: 2px 8px 0; color: #333; }
.tabs .on { margin-top: 3px; padding: 0 8px 2px; background: linear-gradient(#e5e5e5, #fdfdfd); border-top: 1px solid #fff; }
.tabs .ribbon-state { margin-left: 17px; gap: 4px; }
.ribbon-state span { width: 15px; height: 9px; border: 1px solid #333; border-radius: 3px; background: #ddd; font-size: 8px; line-height: 7px; text-align: center; }

.ribbon { display: grid; grid-template-columns: 59px 488px 329px 112px 216px 1fr; background: #fdfdfd; border-bottom: 3px solid #f4f4f4; box-shadow: 0 1px #555; position: relative; color: #444; }
.panel { border-right: 1px solid #bbb; display: flex; flex-direction: column; min-width: 0; }
.panel > h2 { height: 17px; display: flex; align-items: center; justify-content: center; gap: 5px; background: #f0f0f0; border-top: 1px solid #e2e2e2; color: #444; }
.launch span { margin-left: auto; }
.launch svg { margin: 0 4px 0 auto; }
.tools { height: 76px; display: flex; padding-top: 3px; }
.rest { background: linear-gradient(#dcdcdc, #9f9f9f); border-right: 3px solid #ddd; }
.big { flex-direction: column; text-align: center; padding-top: 5px; line-height: 15px; position: relative; gap: 2px; }
.big .caret { position: absolute; right: 0; top: 53px; }
.big.under .caret { right: 50%; top: 56px; }
.modify { width: 44px; height: 72px; margin-left: 8px; border: 1px solid #2f6aa8; background: #bdd9f4; }
.cursor { width: 14px; height: 22px; margin: 3px 0 4px; }
.col { display: flex; flex-direction: column; }
.col button { height: 24px; gap: 5px; }
.graphics .big { width: 72px; margin: 0 2px 0 1px; padding-left: 5px; align-items: center; }
.graphics .col:nth-child(2) { width: 133px; align-items: flex-start; }
.graphics .col button { padding: 0 4px 0 3px; border: 1px solid transparent; }
.graphics .col .active { height: 22px; border-color: #2f6aa8; background: #b7d5f3; margin-top: 1px; }
.graphics .ruled { margin-left: 2px; padding-left: 6px; }
.ruled { border-left: 1px solid #ddd; }
.graphics .col:nth-child(3) { width: 151px; padding-left: 2px; }
.create { padding-left: 1px; }
.create .big { width: 48px; }
.create .col { width: 99px; padding-left: 10px; }
.create .big:nth-child(3) { width: 53px; }
.create .col .caret { margin-left: auto; }
.create .mini { width: 35px; padding-left: 8px; }
.create .mini .caret { margin-left: 0; }
.create .mini:nth-child(5) { width: 33px; padding-left: 9px; }
.create .mini button { gap: 4px; }
.sheetcomp { display: grid; grid-template-columns: 16px 16px 16px 6px; grid-auto-rows: 24px; column-gap: 9px; padding-left: 16px; }
.windows .big:nth-child(1) { width: 66px; margin-left: 3px; }
.windows .big:nth-child(2) { width: 46px; }
.windows .mini { width: 28px; padding-left: 3px; }
.windows .ruled { flex: 1; padding-left: 6px; }
.windows .ruled .caret { right: 2px; }

.qat { height: 23px; margin-top: 1px; display: flex; align-items: center; gap: 8px; padding-left: 8px; background: linear-gradient(#ececec, #b9b9b9); border-bottom: 1px solid #777; }
.qat .dd { gap: 6px; margin-right: 1px; }
.qat .sep { width: 1px; height: 18px; background: #bbb; margin: 0 -3px 0 -2px; }
.qat .active { height: 22px; padding: 0 3px; margin: 0 -4px; border: 1px solid #2f6aa8; background: #b7d5f3; }
.text-tool { width: 16px; justify-content: center; font-weight: bold; font-size: 18px; color: #333; }
.qat .custom { margin-left: 2px; border-top: 1px solid #333; padding-top: 2px; }
.options { height: 26px; background: #e2e3e4; }

main { flex: 1; display: grid; grid-template-columns: 257px 1fr 308px; gap: 0; min-height: 0; }
.dock { height: 20px; display: flex; justify-content: space-between; align-items: center; padding: 0 4px; background: #c2cfdc; border-bottom: 1px solid #dde4ea; }
.dock button { color: #111; font-size: 13px; }
.props { display: flex; flex-direction: column; }
.props-body { flex: 1; display: flex; flex-direction: column; border: 1px solid #777; border-right-color: #ccc; border-left-width: 2px; background: #f0f0f0; }
.type { height: 74px; width: 100%; gap: 4px; padding: 2px 2px 0 3px; background: linear-gradient(#fefefe, #ededed); color: #555; }
.type .thumb { width: 66px; height: 66px; border: 1px solid #ccc; display: grid; place-items: center; }
.thumb svg { width: 31px; height: 31px; }
.type .caret { margin-left: auto; }
.instance { display: flex; gap: 6px; padding: 1px 0; align-items: center; }
.instance select { width: 171px; height: 22px; }
.instance button { gap: 5px; }
select { appearance: none; border: 1px solid #bbb; border-radius: 0; padding: 0 3px; color: #444; background: #eee url("data:image/svg+xml,%3Csvg xmlns='http://www.w3.org/2000/svg' width='8' height='6'%3E%3Cpath d='m1 1 3 3 3-3' fill='none' stroke='%23888' stroke-width='2'/%3E%3C/svg%3E") no-repeat right 4px center; }
.sheet { display: flex; }
table { width: 237px; border-collapse: separate; border-spacing: 0; table-layout: auto; background: #fcfcfc; }
tr { height: 18px; }
th, td { height: 18px; padding: 0 0 0 2px; font-weight: normal; text-align: left; line-height: 16px; white-space: nowrap; border-bottom: 1px dotted #888; border-right: 1px dotted #888; }
th { padding-left: 7px; border-right: 0; }
tr:not(.group) td { border-left: 1px dotted #888; width: 117px; }
.group th { padding-left: 2px; background: #d6d6d6; border: 0; }
.group div { display: flex; justify-content: space-between; align-items: center; padding-right: 4px; }
.group svg { width: 8px; height: 10px; }
.off { color: #888; }
td.field, td.cmd { padding: 0; }
td input[type=text] { display: block; width: 100%; height: 17px; border: 1px solid #111; padding: 0 5px; background: #fff; }
td button { display: block; width: 100%; height: 17px; text-align: center; line-height: 15px; border: 1px solid #aaa; border-right-width: 2px; border-bottom-width: 2px; background: #e7e7e7; }
input[type=checkbox] { appearance: none; display: block; width: 13px; height: 13px; margin: 2px 0 0 1px; border: 1px solid #666; background: #fff; }
.vbar { width: 17px; background: #f0f0f0; display: flex; flex-direction: column; align-items: center; justify-content: space-between; padding: 6px 0; }
.chev { width: 6px; height: 6px; border: solid #555; border-width: 2px 2px 0 0; transform: rotate(-45deg); flex: none; }
.chev.down { transform: rotate(135deg); }
.chev.left { transform: rotate(-135deg); }
.chev.right { transform: rotate(45deg); }
.thumb-v { width: 15px; height: 18px; background: #cdcdcd; }
.thumb-v.tall { height: 184px; margin: 5px 0 auto; }
.thumb-v.low { margin: auto 0 220px; }
.props footer { flex: 1; display: flex; justify-content: space-between; align-items: flex-start; padding: 2px 2px 0; }
.props a { color: #1565b5; }
.props footer button { width: 73px; height: 20px; justify-content: center; border: 1px solid #ddd; color: #999; }

.view { margin: 1px 7px 1px 6px; border: 1px solid #777; border-width: 1px 0 0 1px; display: grid; grid-template-columns: 1fr 17px; grid-template-rows: 1fr 18px; min-width: 0; background: #f0f0f0; }
.drawing { position: relative; background: linear-gradient(#fbfcff, #fdfdfd 20px); min-width: 0; }
.model { display: block; width: 684px; max-width: 100%; height: 484px; }
.glow { fill: #ff0; opacity: .5; }
.halo { fill: #ffff70; mix-blend-mode: multiply; }
.mdi { position: absolute; right: 2px; top: 7px; display: flex; gap: 4px; }
.mdi svg { width: 14px; height: 14px; }
.viewcube { position: absolute; right: 7px; top: 56px; width: 96px; height: 76px; font: 7px "Open Sans", sans-serif; fill: #777; }
.viewcube .s { font-size: 6px; }
.navbar { position: absolute; right: 0; top: 144px; width: 36px; border: 2px solid #999; border-radius: 5px; background: #ececec; display: flex; flex-direction: column; align-items: center; padding: 2px; gap: 8px; }
.navbar button { flex-direction: column; gap: 6px; }
.navbar .line { border-top: 1px solid #999; padding: 8px 4px 0; margin-top: -3px; margin-bottom: 3px; }
.navbar .mini-round { align-self: flex-end; justify-content: center; width: 9px; height: 9px; border-radius: 50%; background: #777; color: #fff; font-size: 8px; line-height: 8px; }
.viewbar { display: flex; align-items: center; gap: 5px; padding-left: 24px; min-width: 0; }
.viewbar .scale { width: 50px; }
.hbar { flex: 1; height: 18px; display: flex; align-items: center; justify-content: space-between; padding: 0 6px 0 5px; }
.thumb-h { width: 17px; height: 16px; background: #cdcdcd; }
.grip { margin: 8px 2px 2px 7px; background: radial-gradient(#aaa 1px, transparent 1px) 0 0 / 3px 3px; }

.browser { display: flex; flex-direction: column; }
.browser .dock { padding-left: 3px; }
.tree { flex: 1; background: #fcfcfc; border: 1px solid #777; border-left-width: 2px; border-right-color: #ddd; padding: 1px 0 0 2px; }
.tree li { position: relative; }
.tree li::before { content: ""; position: absolute; left: 5px; top: 0; bottom: 0; border-left: 1px dotted #aaa; }
.tree li:last-child::before { bottom: auto; height: 10px; }
.tree > li:first-child::before { top: 10px; }
.tree li > div { height: 18px; display: flex; align-items: center; gap: 5px; position: relative; }
.tree li > div::before { content: ""; position: absolute; left: 6px; width: 14px; top: 10px; border-top: 1px dotted #aaa; }
.tree button { width: 9px; height: 9px; margin: 2px 3px 0 1px; border: 1px solid #999; background: #f6f6f6; justify-content: center; font-size: 9px; line-height: 7px; position: relative; }
.tree .ic { background: #fcfcfc; position: relative; }
.tree ul { padding-left: 20px; }
.tree ul div { gap: 10px; }
.tree ul ul div { padding-left: 23px; }
.tree .bare { padding-left: 23px; }
.tree ul ul strong { background: #dedede; margin-left: -3px; padding: 0 3px; line-height: 17px; }
.tree > li > .link { padding-left: 18px; }

.status { height: 23px; display: flex; align-items: center; gap: 5px; padding: 1px 67px 0 2px; background: linear-gradient(#d9d9d9, #c9c9c9); border-top: 1px solid #888; white-space: nowrap; }
.status p { width: 334px; font-size: 11px; }
.status select { height: 20px; background-color: #fcfcfc; border-color: #ddd; color: #999; }
.workset { width: 208px; }
.option { width: 155px; }
.status .count { width: 50px; justify-content: center; gap: 3px; color: #345; }
.addset { margin: 0 4px; }
.selection { margin-left: auto; display: flex; gap: 10px; }
.status .filter { gap: 0; margin-left: -5px; }
```
